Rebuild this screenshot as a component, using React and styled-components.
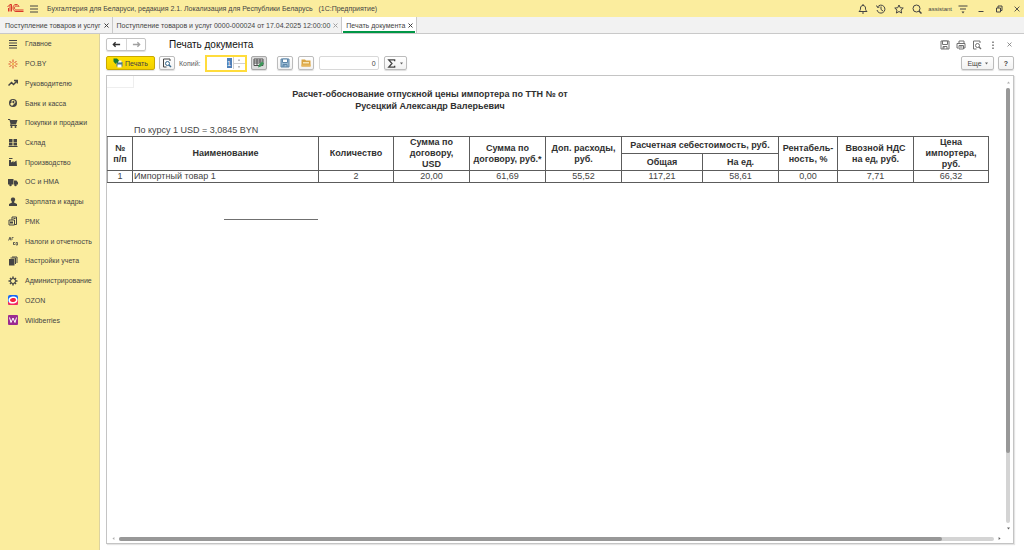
import React from 'react';
import styled, { createGlobalStyle, css } from 'styled-components';

const GlobalStyle = createGlobalStyle`
  * {
    box-sizing: border-box;
  }
  body {
    margin: 0;
    background: #ffffff;
    color: #444444;
    font-family: 'Liberation Sans', Arial, sans-serif;
    font-size: 7px;
  }
  button,
  input {
    font: inherit;
    color: inherit;
  }
`;

const Page = styled.div`
  display: flex;
  flex-direction: column;
  min-height: 100vh;
`;

const TopBar = styled.header`
  display: flex;
  align-items: center;
  gap: 8px;
  height: 17px;
  padding: 0 2px 0 7px;
  background: #fbed9e;
`;

const Brand = styled.div`
  display: flex;
  align-items: center;
  gap: 5px;
`;

const AppTitle = styled.span`
  flex: 1;
  white-space: pre;
`;

const IconButton = styled.button`
  display: flex;
  align-items: center;
  justify-content: center;
  width: 10px;
  height: 12px;
  padding: 0;
  border: 0;
  background: none;
`;

const Account = styled.div`
  display: flex;
  align-items: center;
  gap: 6px;
`;

const UserName = styled.span`
  font-size: 6px;
`;

const Tabs = styled.nav`
  display: flex;
  height: 17px;
  padding-left: 1px;
  background: #f2f2f2;
  border-bottom: 1px solid #c9c9c9;
`;

const Tab = styled.div`
  display: flex;
  align-items: center;
  gap: 3px;
  height: 16px;
  padding: 0 3px 0 4px;
  border-right: 1px solid #c9c9c9;
  white-space: nowrap;
  ${({ $active }) =>
    $active &&
    css`
      background: linear-gradient(#009646, #009646) center bottom / calc(100% - 2px) 2px
        no-repeat #ffffff;
    `}
`;

const TabLink = styled.a`
  color: inherit;
  text-decoration: none;
`;

const TabClose = styled.button`
  display: flex;
  padding: 0;
  border: 0;
  background: none;
  color: ${({ $muted }) => ($muted ? '#a0a0a0' : '#404040')};
`;

const Body = styled.div`
  display: flex;
  flex: 1;
`;

const Sidebar = styled.nav`
  width: 100px;
  background: #fbed9e;
  border-right: 1px solid #dcd3a0;
`;

const Sections = styled.ul`
  display: grid;
  grid-auto-rows: 1fr;
  height: 296px;
  margin: 0;
  padding: 0 0 0 8px;
  list-style: none;
`;

const SectionLink = styled.a`
  display: flex;
  align-items: center;
  gap: 7px;
  height: 100%;
  color: inherit;
  text-decoration: none;
  white-space: nowrap;
`;

const Main = styled.main`
  display: flex;
  flex: 1;
  flex-direction: column;
  min-width: 0;
  padding: 3px 10px 6px 6px;
`;

const FormHeader = styled.div`
  display: flex;
  align-items: center;
  height: 15px;
`;

const History = styled.div`
  display: flex;
  margin-right: 23px;
  border: 1px solid #c4c4c4;
  border-radius: 2px;
  box-shadow: 0 1px 1px #dddddd;
`;

const HistoryButton = styled.button`
  display: flex;
  align-items: center;
  justify-content: center;
  width: 19px;
  height: 11px;
  padding: 0;
  border: 0;
  background: none;
  color: ${({ disabled }) => (disabled ? '#a0a0a0' : '#303030')};

  & + & {
    border-left: 1px solid #d4d4d4;
  }
`;

const Title = styled.h1`
  flex: 1;
  margin: 0;
  color: #101010;
  font-size: 10px;
  font-weight: normal;
`;

const HeaderTools = styled.div`
  display: flex;
  gap: 6px;
  color: #707070;
`;

const Toolbar = styled.div`
  display: flex;
  align-items: center;
  height: 22px;
  margin-bottom: 1px;
`;

const Button = styled.button`
  display: flex;
  align-items: center;
  justify-content: center;
  gap: ${({ $gap }) => $gap || 3}px;
  width: ${({ $width }) => $width || 16}px;
  height: 14px;
  padding: 0;
  border: 1px solid #bcbcbc;
  border-radius: 2px;
  background: linear-gradient(#ffffff, #f2f2f2);
  box-shadow: 0 1px 1px #dddddd;
  white-space: nowrap;
  ${({ $primary }) =>
    $primary &&
    css`
      border-color: #c9a800;
      background: linear-gradient(#ffe100, #f2d000);
    `}
  ${({ $pressed }) =>
    $pressed &&
    css`
      border-color: #a8a8a8;
      background: #dcdcdc;
    `}
`;

const Group = styled.div`
  display: flex;
  align-items: center;
  gap: ${({ $gap }) => $gap || 4}px;
  margin-right: ${({ $end }) => $end || 10}px;
`;

const CopiesLabel = styled.label`
  color: #606060;
`;

const Copies = styled.div`
  display: flex;
  align-items: center;
  justify-content: flex-end;
  width: 42px;
  height: 17px;
  border: 2px solid #ffdc3c;
  background: #ffffff;
`;

const CopiesInput = styled.input`
  width: 5px;
  height: 10px;
  margin-right: 1px;
  padding: 0;
  border: 0;
  outline: 0;
  background: #4f80b8;
  color: #ffffff;
  text-align: center;
`;

const Stepper = styled.div`
  display: flex;
  flex-direction: column;
  border-left: 1px solid #d0d0d0;
`;

const Step = styled.button`
  display: flex;
  align-items: center;
  justify-content: center;
  width: 11px;
  height: 6px;
  padding: 0;
  border: 0;
  background: none;

  & + & {
    border-top: 1px solid #d0d0d0;
  }
`;

const Total = styled.input`
  width: 60px;
  height: 14px;
  padding: 0 2px;
  border: 1px solid #d8d8d8;
  border-radius: 2px;
  text-align: right;
`;

const Spacer = styled.div`
  flex: 1;
`;

const Sheet = styled.section`
  display: grid;
  flex: 1;
  grid-template-columns: minmax(0, 1fr) 8px;
  grid-template-rows: 1fr 9px;
  border: 1px solid #c4c4c4;
  box-shadow: 1px 1px 1px #e4e4e4;
`;

const Report = styled.div`
  font-size: 9px;
`;

const ActiveCell = styled.div`
  width: 27px;
  height: 12px;
  border: solid #eeeeee;
  border-width: 0 1px 1px 0;
`;

const ReportTitle = styled.h2`
  width: 646px;
  max-width: 100%;
  margin: 0;
  color: #303030;
  font-size: 9px;
  line-height: 12px;
  text-align: center;
`;

const Rate = styled.p`
  margin: 12px 0 0;
  padding-left: 27px;
  line-height: 12px;
`;

const Table = styled.table`
  width: 882px;
  border-collapse: collapse;
  table-layout: fixed;
  line-height: 11px;

  th,
  td {
    padding: 0;
    border: 1px solid #5c5c5c;
    text-align: center;
  }
  th {
    height: 17px;
    color: #303030;
    white-space: pre-line;
  }
  tr:first-child th:first-child,
  td:first-child {
    border-left-color: #a0a0a0;
  }
`;

const NameCell = styled.td`
  && {
    padding-left: 1px;
    text-align: left;
  }
`;

const SignLine = styled.div`
  width: 94px;
  margin: 36px 0 0 117px;
  border-top: 1px solid #707070;
`;

const ScrollBar = styled.div`
  display: flex;
  flex-direction: ${({ $vertical }) => ($vertical ? 'column' : 'row')};
  align-items: center;
  gap: 4px;
  padding: ${({ $vertical }) => ($vertical ? '5px 2px 4px 0' : '0 4px 0 5px')};
`;

const Track = styled.div`
  display: flex;
  flex: 1;
  flex-direction: inherit;
  border-radius: 2px;
  background: #d4d4d4;
`;

const Thumb = styled.div`
  flex-basis: ${({ $size }) => $size}%;
  min-width: 4px;
  min-height: 4px;
  border-radius: 2px;
  background: #989898;
`;

const Svg = ({ size = 10, width, children, ...rest }) => (
  <svg
    width={width || size}
    height={size}
    viewBox="0 0 20 20"
    fill="none"
    stroke="currentColor"
    strokeWidth="2"
    aria-hidden="true"
    {...rest}
  >
    {children}
  </svg>
);

const Cross = ({ size = 5, weight = 4 }) => (
  <Svg size={size} strokeWidth={weight}>
    <path d="M2 2 18 18M18 2 2 18" />
  </Svg>
);

const Arrow = ({ size = 3, turn = 0, color = '#606060' }) => (
  <Svg size={size} stroke="none">
    <path d="M0 4h20L10 17z" fill={color} transform={`rotate(${turn} 10 10)`} />
  </Svg>
);

const Logo = () => (
  <svg width="17" height="11" viewBox="0 0 34 22" fill="none" stroke="#d9372a" strokeWidth="2" aria-hidden="true">
    <path d="M1 8l5-5v14M3 10v7M6 3h3v14" />
    <path d="M24 8c-1-4-3-5-6-5-4 0-6 3-6 7s3 7 6 7h15" />
    <path d="M21 8c0-1-1-2-3-2s-3 2-3 4 1 4 3 4h15" />
  </svg>
);

const Menu = () => (
  <Svg>
    <path d="M2 4h16M2 10h16M2 16h16" />
  </Svg>
);

const Bell = () => (
  <Svg>
    <path d="M2 15h16c-3-3-3-4-3-7 0-3-2-5-5-5S5 5 5 8c0 3 0 4-3 7zM10 0v3M8 18h4" />
  </Svg>
);

const Clock = () => (
  <Svg>
    <path d="M3 6a8 8 0 1 1-1 6M1 3l2 4 4-1M10 5v6l4 3" />
  </Svg>
);

const Star = () => (
  <Svg>
    <path d="m10 2 2.5 5.5 6 .6-4.5 4 1.3 6L10 15l-5.300 3.1 1.3-6-4.5-4 6-.6z" />
  </Svg>
);

const Search = () => (
  <Svg>
    <circle cx="9" cy="9" r="7" />
    <path d="m14 14 5 5" strokeWidth="3" />
  </Svg>
);

const Filter = () => (
  <Svg>
    <path d="M1 4h18M4 10h12" />
    <path d="M7 15h6l-3 4z" fill="currentColor" stroke="none" />
  </Svg>
);

const Minimize = () => (
  <Svg>
    <path d="M5 15h10" />
  </Svg>
);

const Restore = () => (
  <Svg>
    <path d="M5 8h8v8H5zM8 8V4h8v9h-3" />
  </Svg>
);

const Printer = () => (
  <Svg>
    <path d="M6 7V2h10v5M4 16H2V7h16v9h-2M6 11h9v7H6zM8 14h5" />
  </Svg>
);

const Floppy = ({ color = 'currentColor', fill = 'none' }) => (
  <Svg stroke={color}>
    <path d="M2 2h16v16H2z" fill={fill} />
    <path d="M5 2h10v7H5z" fill="#fff" />
    <path d="M6 18v-5h8v5M8 14v3" />
  </Svg>
);

const Preview = ({ color = 'currentColor' }) => (
  <Svg>
    <path d="M9 18H3V2h13v4" />
    <circle cx="11" cy="11" r="4" stroke={color} />
    <path d="m14 14 4 4" stroke={color} strokeWidth="3" />
  </Svg>
);

const Dots = () => (
  <Svg>
    <path d="M10 3v3M10 9v3M10 15v3" strokeWidth="3" />
  </Svg>
);

const Go = ({ back }) => (
  <Svg size={9} strokeWidth="3">
    <path d={back ? 'M18 10H3M8 5l-5 5 5 5' : 'M2 10h15M12 5l5 5-5 5'} />
  </Svg>
);

const PrintColor = () => (
  <Svg stroke="none">
    <path d="M7 8h12v9H7z" fill="#477a91" />
    <path d="M10 5h7v4h-7z" fill="#f5f5f5" />
    <path d="M9 13h8v6H9z" fill="#ffffff" />
    <path d="M1 1h7l4 4-3 5-2-1-2 3-4-5z" fill="#187a35" />
  </Svg>
);

const EditTable = () => (
  <Svg width={12}>
    <path d="M0 2h18v13H0z" fill="#f4f4f4" stroke="#505050" />
    <path d="M0 6h18M0 10h14M6 2v13M12 2v8" stroke="#505050" />
    <path d="m8 19 2-6 6-6 4 4-6 6z" fill="#3b9658" stroke="none" />
  </Svg>
);

const Folder = () => (
  <Svg stroke="none">
    <path d="M1 3h7l2 2h9v12H1z" fill="#d9a443" />
    <path d="M4 8h12v3H4z" fill="#f9e6b4" />
    <path d="M1 13h18v4H1z" fill="#e6b65c" />
  </Svg>
);

const sections = [
  {
    name: 'Главное',
    icon: <path d="M2 3h16M2 8h16M2 13h16M2 18h16" />,
  },
  {
    name: 'PO.BY',
    icon: (
      <g stroke="#d94a2b">
        <path d="M10 1v6M10 13v6M3 4l4 4M17 4l-4 4M3 16l4-4M17 16l-4-4M1 10h4M15 10h4" />
        <circle cx="10" cy="10" r="2" stroke="none" fill="#e9a02c" />
      </g>
    ),
  },
  {
    name: 'Руководителю',
    icon: <path d="m1 15 6-6 4 4 7-7M12 5h7v6" strokeWidth="3" />,
  },
  {
    name: 'Банк и касса',
    icon: (
      <>
        <circle cx="10" cy="10" r="8" fill="currentColor" stroke="none" />
        <path d="M8 16V5h3a3 3 0 0 1 0 6H5M5 13h6" stroke="#fbed9e" />
      </>
    ),
  },
  {
    name: 'Покупки и продажи',
    icon: (
      <g fill="currentColor" stroke="none">
        <path d="M0 2h4l1 2h14l-3 9H7v1h11v2H4l1-4-2-8H0z" />
        <circle cx="7" cy="18" r="2" />
        <circle cx="15" cy="18" r="2" />
      </g>
    ),
  },
  {
    name: 'Склад',
    icon: (
      <path
        d="M2 2h7v6H2zM11 2h7v6h-7zM2 9h7v6H2zM11 9h7v6h-7zM1 16h18v2H1z"
        fill="currentColor"
        stroke="none"
      />
    ),
  },
  {
    name: 'Производство',
    icon: <path d="M2 18V6h4v5l5-3v3l6-4 1 11zM2 2h7v2H2z" fill="currentColor" stroke="none" />,
  },
  {
    name: 'ОС и НМА',
    icon: (
      <g fill="currentColor" stroke="none">
        <path d="M0 4h11v11H0zM12 7h5l3 4v4h-8z" />
        <circle cx="5" cy="16" r="2.5" />
        <circle cx="15" cy="16" r="2.5" />
      </g>
    ),
  },
  {
    name: 'Зарплата и кадры',
    icon: (
      <path
        d="M10 1a4 4 0 0 1 3 7l-1 3 6 3v4H2v-4l6-3-1-3a4 4 0 0 1 3-7z"
        fill="currentColor"
        stroke="none"
      />
    ),
  },
  {
    name: 'РМК',
    icon: (
      <>
        <path d="M2 8h11v10H2zM8 8V2h9v15h-4M11 5h4" />
        <path d="M4 11h6v4H4z" fill="currentColor" stroke="none" />
      </>
    ),
  },
  {
    name: 'Налоги и отчетность',
    icon: <path d="M1 9 4 2l2 7M2 6h4M8 8V3h3M11 12v6M11 15l3-3M11 15l3 3M16 13h3v5h-3z" strokeWidth="1.5" />,
  },
  {
    name: 'Настройки учета',
    icon: (
      <>
        <path d="M2 6h11v13H2z" fill="currentColor" stroke="none" />
        <path d="M5 4h10v12M8 2h10v12" />
      </>
    ),
  },
  {
    name: 'Администрирование',
    icon: (
      <>
        <circle cx="10" cy="10" r="5" />
        <path d="M10 1v4M10 15v4M1 10h4M15 10h4M4 4l3 3M13 13l3 3M16 4l-3 3M7 13l-3 3" strokeWidth="3" />
      </>
    ),
  },
  {
    name: 'OZON',
    icon: (
      <g stroke="none">
        <rect width="20" height="20" rx="4" fill="#1565f5" />
        <path d="M0 14 20 9v8a3 3 0 0 1-3 3H3a3 3 0 0 1-3-3z" fill="#f32a62" />
        <ellipse cx="10" cy="10" rx="9" ry="7" fill="#ffffff" transform="rotate(-12 10 10)" />
        <ellipse cx="10" cy="10" rx="6" ry="4" fill="#f3203f" transform="rotate(-12 10 10)" />
      </g>
    ),
  },
  {
    name: 'Wildberries',
    icon: (
      <>
        <rect width="20" height="20" rx="2" fill="#9b2a91" stroke="none" />
        <path d="m3 5 3 10 4-9 4 9 3-10" stroke="#fff" />
      </>
    ),
  },
];

const tabs = [
  { name: 'Поступление товаров и услуг' },
  { name: 'Поступление товаров и услуг 0000-000024 от 17.04.2025 12:00:00', muted: true },
  { name: 'Печать документа', active: true },
];

const columns = [25, 186, 75, 76, 76, 76, 81, 76, 59, 76, 75];

const App = () => {
  return (
    <Page>
      <GlobalStyle />
      <TopBar>
        <Brand>
          <Logo />
          <IconButton aria-label="Меню"><Menu /></IconButton>
        </Brand>
        <AppTitle>
          {'Бухгалтерия для Беларуси, редакция 2.1. Локализация для Республики Беларусь   (1С:Предприятие)'}
        </AppTitle>
        <IconButton aria-label="Уведомления"><Bell /></IconButton>
        <IconButton aria-label="История"><Clock /></IconButton>
        <IconButton aria-label="Избранное"><Star /></IconButton>
        <Account>
          <IconButton aria-label="Поиск"><Search /></IconButton>
          <UserName>assistant</UserName>
          <IconButton aria-label="Настройки"><Filter /></IconButton>
        </Account>
        <IconButton aria-label="Свернуть"><Minimize /></IconButton>
        <IconButton aria-label="Восстановить"><Restore /></IconButton>
        <IconButton aria-label="Закрыть"><Cross size={6} weight={3} /></IconButton>
      </TopBar>

      <Tabs>
        {tabs.map(({ name, active, muted }) => (
          <Tab key={name} $active={active}>
            <TabLink href="#">{name}</TabLink>
            <TabClose $muted={muted} aria-label="Закрыть вкладку">
              <Cross />
            </TabClose>
          </Tab>
        ))}
      </Tabs>

      <Body>
        <Sidebar>
          <Sections>
            {sections.map(({ name, icon }) => (
              <li key={name}>
                <SectionLink href="#">
                  <Svg>{icon}</Svg>
                  {name}
                </SectionLink>
              </li>
            ))}
          </Sections>
        </Sidebar>

        <Main>
          <FormHeader>
            <History>
              <HistoryButton aria-label="Назад"><Go back /></HistoryButton>
              <HistoryButton disabled aria-label="Вперед"><Go /></HistoryButton>
            </History>
            <Title>Печать документа</Title>
            <HeaderTools>
              <IconButton aria-label="Сохранить"><Floppy /></IconButton>
              <IconButton aria-label="Печать"><Printer /></IconButton>
              <IconButton aria-label="Просмотр"><Preview /></IconButton>
              <IconButton aria-label="Еще"><Dots /></IconButton>
              <IconButton aria-label="Закрыть"><Cross size={5} weight={3} /></IconButton>
            </HeaderTools>
          </FormHeader>

          <Toolbar>
            <Group>
              <Button $primary $width={49} $gap={2}>
                <PrintColor />
                Печать
              </Button>
              <Button aria-label="Предварительный просмотр">
                <Preview color="#35688c" />
              </Button>
              <CopiesLabel htmlFor="copies">Копий:</CopiesLabel>
              <Copies>
                <CopiesInput id="copies" defaultValue="1" />
                <Stepper>
                  <Step aria-label="Больше"><Arrow size={2} turn={180} /></Step>
                  <Step aria-label="Меньше"><Arrow size={2} /></Step>
                </Stepper>
              </Copies>
              <Button $pressed aria-label="Редактирование"><EditTable /></Button>
            </Group>
            <Group $gap={5}>
              <Button aria-label="Сохранить"><Floppy color="#5d86a8" fill="#9dbdd5" /></Button>
              <Button aria-label="Отправить"><Folder /></Button>
              <Total aria-label="Сумма" defaultValue="0" />
              <Button $width={23} $gap={4} aria-label="Сумма">
                <Svg size={9} strokeWidth="3">
                  <path d="M17 5V2H4l7 8-7 8h13v-3" />
                </Svg>
                <Arrow />
              </Button>
            </Group>
            <Spacer />
            <Group $end="0">
              <Button $width={33}>
                Еще
                <Arrow />
              </Button>
              <Button aria-label="Справка"><b>?</b></Button>
            </Group>
          </Toolbar>

          <Sheet>
            <Report>
              <ActiveCell />
              <ReportTitle>
                Расчет-обоснование отпускной цены импортера по ТТН № от
                <br />
                Русецкий Александр Валерьевич
              </ReportTitle>
              <Rate>По курсу 1 USD = 3,0845 BYN</Rate>
              <Table>
                <colgroup>
                  {columns.map((width, i) => (
                    <col key={i} width={width} />
                  ))}
                </colgroup>
                <thead>
                  <tr>
                    <th rowSpan="2">{'№\nп/п'}</th>
                    <th rowSpan="2">Наименование</th>
                    <th rowSpan="2">Количество</th>
                    <th rowSpan="2">{'Сумма по\nдоговору,\nUSD'}</th>
                    <th rowSpan="2">{'Сумма по\nдоговору, руб.*'}</th>
                    <th rowSpan="2">{'Доп. расходы,\nруб.'}</th>
                    <th colSpan="2">Расчетная себестоимость, руб.</th>
                    <th rowSpan="2">{'Рентабель-\nность, %'}</th>
                    <th rowSpan="2">{'Ввозной НДС\nна ед, руб.'}</th>
                    <th rowSpan="2">{'Цена\nимпортера,\nруб.'}</th>
                  </tr>
                  <tr>
                    <th>Общая</th>
                    <th>На ед.</th>
                  </tr>
                </thead>
                <tbody>
                  <tr>
                    <td>1</td>
                    <NameCell>Импортный товар 1</NameCell>
                    <td>2</td>
                    <td>20,00</td>
                    <td>61,69</td>
                    <td>55,52</td>
                    <td>117,21</td>
                    <td>58,61</td>
                    <td>0,00</td>
                    <td>7,71</td>
                    <td>66,32</td>
                  </tr>
                </tbody>
              </Table>
              <SignLine />
            </Report>
            <ScrollBar $vertical>
              <Arrow turn={180} color="#b0b0b0" />
              <Track>
                <Thumb $size={84} />
              </Track>
              <Arrow />
            </ScrollBar>
            <ScrollBar>
              <Arrow turn={90} color="#b0b0b0" />
              <Track>
                <Thumb $size={94} />
              </Track>
              <Arrow turn={-90} />
            </ScrollBar>
          </Sheet>
        </Main>
      </Body>
    </Page>
  );
};

export default App;
